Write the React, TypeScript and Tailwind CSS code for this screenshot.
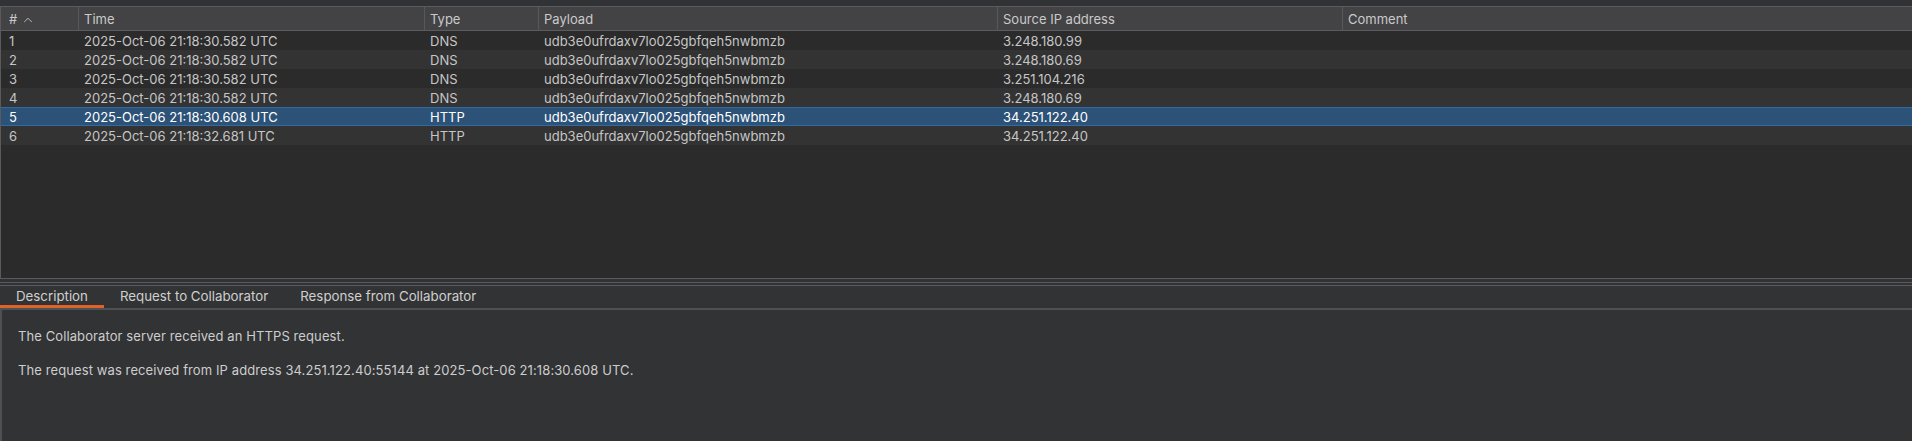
import { ChevronUp } from "lucide-react";

type Interaction = {
  id: number;
  time: string;
  type: string;
  payload: string;
  source: string;
  comment: string;
};

const rows: Interaction[] = [
  { id: 1, time: "2025-Oct-06 21:18:30.582 UTC", type: "DNS", payload: "udb3e0ufrdaxv7lo025gbfqeh5nwbmzb", source: "3.248.180.99", comment: "" },
  { id: 2, time: "2025-Oct-06 21:18:30.582 UTC", type: "DNS", payload: "udb3e0ufrdaxv7lo025gbfqeh5nwbmzb", source: "3.248.180.69", comment: "" },
  { id: 3, time: "2025-Oct-06 21:18:30.582 UTC", type: "DNS", payload: "udb3e0ufrdaxv7lo025gbfqeh5nwbmzb", source: "3.251.104.216", comment: "" },
  { id: 4, time: "2025-Oct-06 21:18:30.582 UTC", type: "DNS", payload: "udb3e0ufrdaxv7lo025gbfqeh5nwbmzb", source: "3.248.180.69", comment: "" },
  { id: 5, time: "2025-Oct-06 21:18:30.608 UTC", type: "HTTP", payload: "udb3e0ufrdaxv7lo025gbfqeh5nwbmzb", source: "34.251.122.40", comment: "" },
  { id: 6, time: "2025-Oct-06 21:18:32.681 UTC", type: "HTTP", payload: "udb3e0ufrdaxv7lo025gbfqeh5nwbmzb", source: "34.251.122.40", comment: "" },
];

const selectedId = 5;

const tabs = ["Description", "Request to Collaborator", "Response from Collaborator"];

function HeaderCell({ children, className }: { children: React.ReactNode; className: string }) {
  return (
    <div className={`flex h-full items-center border-r border-[#58585a] pt-[2px] ${className}`}>
      {children}
    </div>
  );
}

export default function App() {
  return (
    <div
      className="flex h-[441px] w-full flex-col overflow-hidden bg-[#313235] text-[13px] text-[#c6c6c6]"
      style={{ fontFamily: "Inter, 'Noto Sans', sans-serif" }}
    >
      <div className="h-[6px] shrink-0" />

      {/* interactions table */}
      <div className="flex h-[273px] shrink-0 flex-col border-b border-l border-[#5a5a5c] bg-[#2b2b2b]">
        <div className="flex h-[25px] shrink-0 border-y border-[#5c5c5e] bg-[#434345] text-[#cacaca]">
          <HeaderCell className="w-[78px] gap-[4px] pl-[8px]">
            <span>#</span>
            <ChevronUp className="h-[14px] w-[14px]" strokeWidth={1.5} />
          </HeaderCell>
          <HeaderCell className="w-[346px] pl-[5px]">Time</HeaderCell>
          <HeaderCell className="w-[114px] pl-[5px]">Type</HeaderCell>
          <HeaderCell className="w-[459px] pl-[5px]">Payload</HeaderCell>
          <HeaderCell className="w-[345px] pl-[5px]">Source IP address</HeaderCell>
          <div className="flex h-full flex-1 items-center pl-[5px] pt-[2px]">Comment</div>
        </div>

        {rows.map((r) => {
          const sel = r.id === selectedId;
          return (
            <div
              key={r.id}
              className={
                sel
                  ? "flex h-[19px] shrink-0 items-center border-y border-[#2f6aa5] bg-[#2d5278] pt-[3px] text-white"
                  : r.id % 2 === 1
                    ? "flex h-[19px] shrink-0 items-center bg-[#2b2b2b] pt-[3px]"
                    : "flex h-[19px] shrink-0 items-center bg-[#333333] pt-[3px]"
              }
            >
              <div className="w-[78px] pl-[8px]">{r.id}</div>
              <div className="w-[346px] pl-[5px]">{r.time}</div>
              <div className="w-[114px] pl-[5px]">{r.type}</div>
              <div className="w-[459px] pl-[5px]">{r.payload}</div>
              <div className="w-[345px] pl-[5px]">{r.source}</div>
              <div className="flex-1 pl-[5px]">{r.comment}</div>
            </div>
          );
        })}
      </div>

      {/* split divider */}
      <div className="h-[7px] shrink-0 border-b border-[#5a5a5c] pt-[3px]">
        <div className="h-px bg-[#5a5a5c]" />
      </div>

      {/* tabs */}
      <div className="flex h-[24px] shrink-0 border-b-2 border-[#4f5052] bg-[#323335] text-[13.3px]">
        {tabs.map((t, i) => (
          <div
            key={t}
            className={
              i === 0
                ? "flex h-full items-center border-b-[3px] border-[#e0622b] px-[16px] pt-[2px] text-[#cfcfcf]"
                : "flex h-full items-center px-[16px] pt-[2px] pb-[3px] text-[#cfcfcf]"
            }
          >
            {t}
          </div>
        ))}
      </div>

      {/* description body */}
      <div className="flex-1 border-l-2 border-[#4f5052] bg-[#323335] pl-[16px] pt-[17px] text-[13px] leading-[18px] tracking-[0.1px] text-[#cdcdcd]">
        <p>The Collaborator server received an HTTPS request.</p>
        <p className="mt-[16px]">
          The request was received from IP address 34.251.122.40:55144 at 2025-Oct-06 21:18:30.608 UTC.
        </p>
      </div>
    </div>
  );
}
